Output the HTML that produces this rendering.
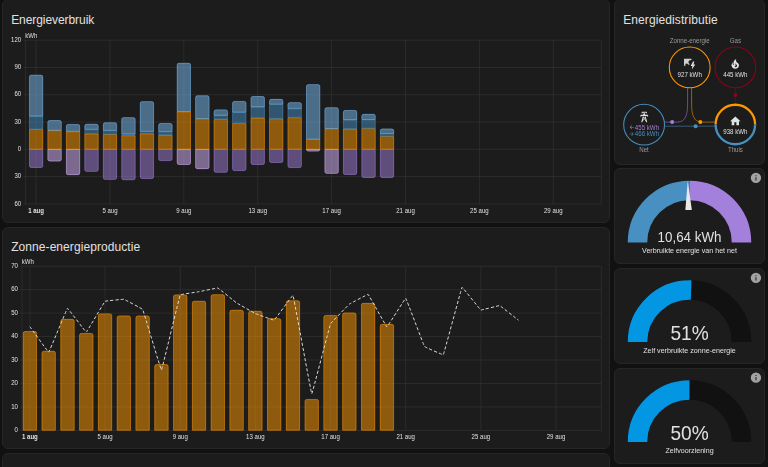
<!DOCTYPE html>
<html lang="nl">
<head>
<meta charset="utf-8">
<title>Energie</title>
<style>
html,body{margin:0;padding:0;background:#111111;}
body{width:768px;height:467px;overflow:hidden;position:relative;font-family:"Liberation Sans", Arial, sans-serif;color:#e1e1e1;}
.card{position:absolute;box-sizing:border-box;background:#1c1c1c;border:1px solid #262626;border-radius:6px;}
.title{position:absolute;font-size:12px;line-height:14px;white-space:nowrap;color:#e1e1e1;}
svg{position:absolute;left:0;top:0;font-family:"Liberation Sans", Arial, sans-serif;will-change:transform;}
</style>
</head>
<body>
<div class="card" style="left:1.5px;top:-1px;width:608.8px;height:223.8px"></div>
<div class="card" style="left:1.5px;top:226.6px;width:608.8px;height:222.8px"></div>
<div class="card" style="left:1.5px;top:452.7px;width:608.8px;height:40px"></div>
<div class="card" style="left:613.7px;top:-1px;width:151.3px;height:165.8px"></div>
<div class="card" style="left:613.7px;top:168.4px;width:151.3px;height:95.8px"></div>
<div class="card" style="left:613.7px;top:268.4px;width:151.3px;height:95.8px"></div>
<div class="card" style="left:613.7px;top:368.4px;width:151.3px;height:95.6px"></div>
<div class="title" style="left:11.2px;top:13.3px;letter-spacing:-0.07px">Energieverbruik</div>
<div class="title" style="left:11.2px;top:240.2px;letter-spacing:0.07px">Zonne-energieproductie</div>
<div class="title" style="left:623.2px;top:13.1px;letter-spacing:0.1px">Energiedistributie</div>
<svg width="768" height="467" viewBox="0 0 768 467">
<g id="usage">
<path d="M23.6,40.2 H601.3 M23.6,67.48 H601.3 M23.6,94.77 H601.3 M23.6,122.05 H601.3 M23.6,149.33 H601.3 M23.6,176.62 H601.3 M23.6,203.9 H601.3 M36.1,40.2 V203.9 M109.98,40.2 V203.9 M183.86,40.2 V203.9 M257.74,40.2 V203.9 M331.62,40.2 V203.9 M405.5,40.2 V203.9 M479.38,40.2 V203.9 M553.26,40.2 V203.9 M25.6,40.2 V203.9 M601.3,40.2 V203.9" stroke="#353535" stroke-width="0.6" fill="none"/>
<text transform="translate(21.2,41.9) scale(0.88,1)" font-size="6.9" text-anchor="end" fill="#e1e1e1" font-weight="normal" >120</text>
<text transform="translate(21.2,69.18) scale(0.88,1)" font-size="6.9" text-anchor="end" fill="#e1e1e1" font-weight="normal" >90</text>
<text transform="translate(21.2,96.47) scale(0.88,1)" font-size="6.9" text-anchor="end" fill="#e1e1e1" font-weight="normal" >60</text>
<text transform="translate(21.2,123.75) scale(0.88,1)" font-size="6.9" text-anchor="end" fill="#e1e1e1" font-weight="normal" >30</text>
<text transform="translate(21.2,151.03) scale(0.88,1)" font-size="6.9" text-anchor="end" fill="#e1e1e1" font-weight="normal" >0</text>
<text transform="translate(21.2,178.32) scale(0.88,1)" font-size="6.9" text-anchor="end" fill="#e1e1e1" font-weight="normal" >30</text>
<text transform="translate(21.2,205.6) scale(0.88,1)" font-size="6.9" text-anchor="end" fill="#e1e1e1" font-weight="normal" >60</text>
<text transform="translate(25.2,38) scale(0.88,1)" font-size="6.9" text-anchor="start" fill="#e1e1e1" font-weight="normal" >kWh</text>
<text transform="translate(36.1,212.5) scale(0.88,1)" font-size="6.9" text-anchor="middle" fill="#e1e1e1" font-weight="bold" >1 aug</text>
<text transform="translate(109.98,212.5) scale(0.88,1)" font-size="6.9" text-anchor="middle" fill="#e1e1e1" font-weight="normal" >5 aug</text>
<text transform="translate(183.86,212.5) scale(0.88,1)" font-size="6.9" text-anchor="middle" fill="#e1e1e1" font-weight="normal" >9 aug</text>
<text transform="translate(257.74,212.5) scale(0.88,1)" font-size="6.9" text-anchor="middle" fill="#e1e1e1" font-weight="normal" >13 aug</text>
<text transform="translate(331.62,212.5) scale(0.88,1)" font-size="6.9" text-anchor="middle" fill="#e1e1e1" font-weight="normal" >17 aug</text>
<text transform="translate(405.5,212.5) scale(0.88,1)" font-size="6.9" text-anchor="middle" fill="#e1e1e1" font-weight="normal" >21 aug</text>
<text transform="translate(479.38,212.5) scale(0.88,1)" font-size="6.9" text-anchor="middle" fill="#e1e1e1" font-weight="normal" >25 aug</text>
<text transform="translate(553.26,212.5) scale(0.88,1)" font-size="6.9" text-anchor="middle" fill="#e1e1e1" font-weight="normal" >29 aug</text>
<path d="M29.2,149.33 L29.2,129.3 L43,129.3 L43,149.33 Z" fill="#ff9800" fill-opacity="0.5"/>
<path d="M29.43,149.11 L29.43,129.53 L42.77,129.53 L42.77,149.11 Z" fill="none" stroke="#ff9800" stroke-width="0.45"/>
<path d="M29.2,129.3 L29.2,116.2 L43,116.2 L43,129.3 Z" fill="#488fc2" fill-opacity="0.5"/>
<path d="M29.43,129.08 L29.43,116.42 L42.77,116.42 L42.77,129.08 Z" fill="none" stroke="#488fc2" stroke-width="0.45"/>
<path d="M29.2,116.2 L29.2,76.95 Q29.2,74.95 31.2,74.95 L41,74.95 Q43,74.95 43,76.95 L43,116.2 Z" fill="#7bbdf3" fill-opacity="0.5"/>
<path d="M29.43,115.98 L29.43,76.95 Q29.43,75.17 31.2,75.17 L41,75.17 Q42.77,75.17 42.77,76.95 L42.77,115.98 Z" fill="none" stroke="#7bbdf3" stroke-width="0.45"/>
<path d="M29.2,149.33 L29.2,165.7 Q29.2,167.7 31.2,167.7 L41,167.7 Q43,167.7 43,165.7 L43,149.33 Z" fill="#a280db" fill-opacity="0.5"/>
<path d="M29.43,149.56 L29.43,165.7 Q29.43,167.47 31.2,167.47 L41,167.47 Q42.77,167.47 42.77,165.7 L42.77,149.56 Z" fill="none" stroke="#a280db" stroke-width="0.45"/>
<path d="M47.67,149.33 L47.67,130.4 L61.47,130.4 L61.47,149.33 Z" fill="#ff9800" fill-opacity="0.5"/>
<path d="M47.9,149.11 L47.9,130.62 L61.24,130.62 L61.24,149.11 Z" fill="none" stroke="#ff9800" stroke-width="0.45"/>
<path d="M47.67,130.4 L47.67,122.3 Q47.67,120.3 49.67,120.3 L59.47,120.3 Q61.47,120.3 61.47,122.3 L61.47,130.4 Z" fill="#7bbdf3" fill-opacity="0.5"/>
<path d="M47.9,130.18 L47.9,122.3 Q47.9,120.52 49.67,120.52 L59.47,120.52 Q61.24,120.52 61.24,122.3 L61.24,130.18 Z" fill="none" stroke="#7bbdf3" stroke-width="0.45"/>
<path d="M47.67,149.33 L47.67,159.2 Q47.67,161.2 49.67,161.2 L59.47,161.2 Q61.47,161.2 61.47,159.2 L61.47,149.33 Z" fill="#dcb6ff" fill-opacity="0.5"/>
<path d="M47.9,149.56 L47.9,159.2 Q47.9,160.97 49.67,160.97 L59.47,160.97 Q61.24,160.97 61.24,159.2 L61.24,149.56 Z" fill="none" stroke="#dcb6ff" stroke-width="0.45"/>
<path d="M66.14,149.33 L66.14,131.5 L79.94,131.5 L79.94,149.33 Z" fill="#ff9800" fill-opacity="0.5"/>
<path d="M66.36,149.11 L66.36,131.72 L79.72,131.72 L79.72,149.11 Z" fill="none" stroke="#ff9800" stroke-width="0.45"/>
<path d="M66.14,131.5 L66.14,126.2 Q66.14,124.2 68.14,124.2 L77.94,124.2 Q79.94,124.2 79.94,126.2 L79.94,131.5 Z" fill="#7bbdf3" fill-opacity="0.5"/>
<path d="M66.36,131.28 L66.36,126.2 Q66.36,124.42 68.14,124.42 L77.94,124.42 Q79.72,124.42 79.72,126.2 L79.72,131.28 Z" fill="none" stroke="#7bbdf3" stroke-width="0.45"/>
<path d="M66.14,149.33 L66.14,172.9 Q66.14,174.9 68.14,174.9 L77.94,174.9 Q79.94,174.9 79.94,172.9 L79.94,149.33 Z" fill="#dcb6ff" fill-opacity="0.5"/>
<path d="M66.36,149.56 L66.36,172.9 Q66.36,174.68 68.14,174.68 L77.94,174.68 Q79.72,174.68 79.72,172.9 L79.72,149.56 Z" fill="none" stroke="#dcb6ff" stroke-width="0.45"/>
<path d="M84.61,149.33 L84.61,133.8 L98.41,133.8 L98.41,149.33 Z" fill="#ff9800" fill-opacity="0.5"/>
<path d="M84.83,149.11 L84.83,134.03 L98.19,134.03 L98.19,149.11 Z" fill="none" stroke="#ff9800" stroke-width="0.45"/>
<path d="M84.61,133.8 L84.61,129.5 L98.41,129.5 L98.41,133.8 Z" fill="#488fc2" fill-opacity="0.5"/>
<path d="M84.83,133.58 L84.83,129.72 L98.19,129.72 L98.19,133.58 Z" fill="none" stroke="#488fc2" stroke-width="0.45"/>
<path d="M84.61,129.5 L84.61,126 Q84.61,124 86.61,124 L96.41,124 Q98.41,124 98.41,126 L98.41,129.5 Z" fill="#7bbdf3" fill-opacity="0.5"/>
<path d="M84.83,129.28 L84.83,126 Q84.83,124.22 86.61,124.22 L96.41,124.22 Q98.19,124.22 98.19,126 L98.19,129.28 Z" fill="none" stroke="#7bbdf3" stroke-width="0.45"/>
<path d="M84.61,149.33 L84.61,169.6 Q84.61,171.6 86.61,171.6 L96.41,171.6 Q98.41,171.6 98.41,169.6 L98.41,149.33 Z" fill="#a280db" fill-opacity="0.5"/>
<path d="M84.83,149.56 L84.83,169.6 Q84.83,171.38 86.61,171.38 L96.41,171.38 Q98.19,171.38 98.19,169.6 L98.19,149.56 Z" fill="none" stroke="#a280db" stroke-width="0.45"/>
<path d="M103.08,149.33 L103.08,134.3 L116.88,134.3 L116.88,149.33 Z" fill="#ff9800" fill-opacity="0.5"/>
<path d="M103.3,149.11 L103.3,134.53 L116.66,134.53 L116.66,149.11 Z" fill="none" stroke="#ff9800" stroke-width="0.45"/>
<path d="M103.08,134.3 L103.08,130.6 L116.88,130.6 L116.88,134.3 Z" fill="#488fc2" fill-opacity="0.5"/>
<path d="M103.3,134.08 L103.3,130.82 L116.66,130.82 L116.66,134.08 Z" fill="none" stroke="#488fc2" stroke-width="0.45"/>
<path d="M103.08,130.6 L103.08,124.6 Q103.08,122.6 105.08,122.6 L114.88,122.6 Q116.88,122.6 116.88,124.6 L116.88,130.6 Z" fill="#7bbdf3" fill-opacity="0.5"/>
<path d="M103.3,130.38 L103.3,124.6 Q103.3,122.82 105.08,122.82 L114.88,122.82 Q116.66,122.82 116.66,124.6 L116.66,130.38 Z" fill="none" stroke="#7bbdf3" stroke-width="0.45"/>
<path d="M103.08,149.33 L103.08,177.6 Q103.08,179.6 105.08,179.6 L114.88,179.6 Q116.88,179.6 116.88,177.6 L116.88,149.33 Z" fill="#a280db" fill-opacity="0.5"/>
<path d="M103.3,149.56 L103.3,177.6 Q103.3,179.38 105.08,179.38 L114.88,179.38 Q116.66,179.38 116.66,177.6 L116.66,149.56 Z" fill="none" stroke="#a280db" stroke-width="0.45"/>
<path d="M121.55,149.33 L121.55,135.6 L135.35,135.6 L135.35,149.33 Z" fill="#ff9800" fill-opacity="0.5"/>
<path d="M121.77,149.11 L121.77,135.82 L135.12,135.82 L135.12,149.11 Z" fill="none" stroke="#ff9800" stroke-width="0.45"/>
<path d="M121.55,135.6 L121.55,134.1 L135.35,134.1 L135.35,135.6 Z" fill="#488fc2" fill-opacity="0.5"/>
<path d="M121.77,135.38 L121.77,134.32 L135.12,134.32 L135.12,135.38 Z" fill="none" stroke="#488fc2" stroke-width="0.45"/>
<path d="M121.55,134.1 L121.55,119.4 Q121.55,117.4 123.55,117.4 L133.35,117.4 Q135.35,117.4 135.35,119.4 L135.35,134.1 Z" fill="#7bbdf3" fill-opacity="0.5"/>
<path d="M121.77,133.88 L121.77,119.4 Q121.77,117.62 123.55,117.62 L133.35,117.62 Q135.12,117.62 135.12,119.4 L135.12,133.88 Z" fill="none" stroke="#7bbdf3" stroke-width="0.45"/>
<path d="M121.55,149.33 L121.55,178 Q121.55,180 123.55,180 L133.35,180 Q135.35,180 135.35,178 L135.35,149.33 Z" fill="#a280db" fill-opacity="0.5"/>
<path d="M121.77,149.56 L121.77,178 Q121.77,179.78 123.55,179.78 L133.35,179.78 Q135.12,179.78 135.12,178 L135.12,149.56 Z" fill="none" stroke="#a280db" stroke-width="0.45"/>
<path d="M140.02,149.33 L140.02,133.8 L153.82,133.8 L153.82,149.33 Z" fill="#ff9800" fill-opacity="0.5"/>
<path d="M140.24,149.11 L140.24,134.03 L153.59,134.03 L153.59,149.11 Z" fill="none" stroke="#ff9800" stroke-width="0.45"/>
<path d="M140.02,133.8 L140.02,131.5 L153.82,131.5 L153.82,133.8 Z" fill="#488fc2" fill-opacity="0.5"/>
<path d="M140.24,133.58 L140.24,131.72 L153.59,131.72 L153.59,133.58 Z" fill="none" stroke="#488fc2" stroke-width="0.45"/>
<path d="M140.02,131.5 L140.02,103.45 Q140.02,101.45 142.02,101.45 L151.82,101.45 Q153.82,101.45 153.82,103.45 L153.82,131.5 Z" fill="#7bbdf3" fill-opacity="0.5"/>
<path d="M140.24,131.28 L140.24,103.45 Q140.24,101.67 142.02,101.67 L151.82,101.67 Q153.59,101.67 153.59,103.45 L153.59,131.28 Z" fill="none" stroke="#7bbdf3" stroke-width="0.45"/>
<path d="M140.02,149.33 L140.02,176.8 Q140.02,178.8 142.02,178.8 L151.82,178.8 Q153.82,178.8 153.82,176.8 L153.82,149.33 Z" fill="#a280db" fill-opacity="0.5"/>
<path d="M140.24,149.56 L140.24,176.8 Q140.24,178.58 142.02,178.58 L151.82,178.58 Q153.59,178.58 153.59,176.8 L153.59,149.56 Z" fill="none" stroke="#a280db" stroke-width="0.45"/>
<path d="M158.49,149.33 L158.49,135 L172.29,135 L172.29,149.33 Z" fill="#ff9800" fill-opacity="0.5"/>
<path d="M158.71,149.11 L158.71,135.22 L172.06,135.22 L172.06,149.11 Z" fill="none" stroke="#ff9800" stroke-width="0.45"/>
<path d="M158.49,135 L158.49,131.8 L172.29,131.8 L172.29,135 Z" fill="#488fc2" fill-opacity="0.5"/>
<path d="M158.71,134.78 L158.71,132.03 L172.06,132.03 L172.06,134.78 Z" fill="none" stroke="#488fc2" stroke-width="0.45"/>
<path d="M158.49,131.8 L158.49,125.3 Q158.49,123.3 160.49,123.3 L170.29,123.3 Q172.29,123.3 172.29,125.3 L172.29,131.8 Z" fill="#7bbdf3" fill-opacity="0.5"/>
<path d="M158.71,131.58 L158.71,125.3 Q158.71,123.52 160.49,123.52 L170.29,123.52 Q172.06,123.52 172.06,125.3 L172.06,131.58 Z" fill="none" stroke="#7bbdf3" stroke-width="0.45"/>
<path d="M158.49,149.33 L158.49,158.8 Q158.49,160.8 160.49,160.8 L170.29,160.8 Q172.29,160.8 172.29,158.8 L172.29,149.33 Z" fill="#a280db" fill-opacity="0.5"/>
<path d="M158.71,149.56 L158.71,158.8 Q158.71,160.58 160.49,160.58 L170.29,160.58 Q172.06,160.58 172.06,158.8 L172.06,149.56 Z" fill="none" stroke="#a280db" stroke-width="0.45"/>
<path d="M176.96,149.33 L176.96,111.7 L190.76,111.7 L190.76,149.33 Z" fill="#ff9800" fill-opacity="0.5"/>
<path d="M177.18,149.11 L177.18,111.92 L190.53,111.92 L190.53,149.11 Z" fill="none" stroke="#ff9800" stroke-width="0.45"/>
<path d="M176.96,111.7 L176.96,65 Q176.96,63 178.96,63 L188.76,63 Q190.76,63 190.76,65 L190.76,111.7 Z" fill="#7bbdf3" fill-opacity="0.5"/>
<path d="M177.18,111.48 L177.18,65 Q177.18,63.23 178.96,63.23 L188.76,63.23 Q190.53,63.23 190.53,65 L190.53,111.48 Z" fill="none" stroke="#7bbdf3" stroke-width="0.45"/>
<path d="M176.96,149.33 L176.96,162.7 Q176.96,164.7 178.96,164.7 L188.76,164.7 Q190.76,164.7 190.76,162.7 L190.76,149.33 Z" fill="#dcb6ff" fill-opacity="0.5"/>
<path d="M177.18,149.56 L177.18,162.7 Q177.18,164.47 178.96,164.47 L188.76,164.47 Q190.53,164.47 190.53,162.7 L190.53,149.56 Z" fill="none" stroke="#dcb6ff" stroke-width="0.45"/>
<path d="M195.43,149.33 L195.43,118.7 L209.23,118.7 L209.23,149.33 Z" fill="#ff9800" fill-opacity="0.5"/>
<path d="M195.65,149.11 L195.65,118.92 L209,118.92 L209,149.11 Z" fill="none" stroke="#ff9800" stroke-width="0.45"/>
<path d="M195.43,118.7 L195.43,97.6 Q195.43,95.6 197.43,95.6 L207.23,95.6 Q209.23,95.6 209.23,97.6 L209.23,118.7 Z" fill="#7bbdf3" fill-opacity="0.5"/>
<path d="M195.65,118.48 L195.65,97.6 Q195.65,95.82 197.43,95.82 L207.23,95.82 Q209,95.82 209,97.6 L209,118.48 Z" fill="none" stroke="#7bbdf3" stroke-width="0.45"/>
<path d="M195.43,149.33 L195.43,166.9 Q195.43,168.9 197.43,168.9 L207.23,168.9 Q209.23,168.9 209.23,166.9 L209.23,149.33 Z" fill="#dcb6ff" fill-opacity="0.5"/>
<path d="M195.65,149.56 L195.65,166.9 Q195.65,168.68 197.43,168.68 L207.23,168.68 Q209,168.68 209,166.9 L209,149.56 Z" fill="none" stroke="#dcb6ff" stroke-width="0.45"/>
<path d="M213.9,149.33 L213.9,119.3 L227.7,119.3 L227.7,149.33 Z" fill="#ff9800" fill-opacity="0.5"/>
<path d="M214.12,149.11 L214.12,119.52 L227.47,119.52 L227.47,149.11 Z" fill="none" stroke="#ff9800" stroke-width="0.45"/>
<path d="M213.9,119.3 L213.9,115.4 L227.7,115.4 L227.7,119.3 Z" fill="#488fc2" fill-opacity="0.5"/>
<path d="M214.12,119.08 L214.12,115.62 L227.47,115.62 L227.47,119.08 Z" fill="none" stroke="#488fc2" stroke-width="0.45"/>
<path d="M213.9,115.4 L213.9,111.7 Q213.9,109.7 215.9,109.7 L225.7,109.7 Q227.7,109.7 227.7,111.7 L227.7,115.4 Z" fill="#7bbdf3" fill-opacity="0.5"/>
<path d="M214.12,115.18 L214.12,111.7 Q214.12,109.92 215.9,109.92 L225.7,109.92 Q227.47,109.92 227.47,111.7 L227.47,115.18 Z" fill="none" stroke="#7bbdf3" stroke-width="0.45"/>
<path d="M213.9,149.33 L213.9,170.5 Q213.9,172.5 215.9,172.5 L225.7,172.5 Q227.7,172.5 227.7,170.5 L227.7,149.33 Z" fill="#a280db" fill-opacity="0.5"/>
<path d="M214.12,149.56 L214.12,170.5 Q214.12,172.28 215.9,172.28 L225.7,172.28 Q227.47,172.28 227.47,170.5 L227.47,149.56 Z" fill="none" stroke="#a280db" stroke-width="0.45"/>
<path d="M232.37,149.33 L232.37,123.4 L246.17,123.4 L246.17,149.33 Z" fill="#ff9800" fill-opacity="0.5"/>
<path d="M232.59,149.11 L232.59,123.62 L245.94,123.62 L245.94,149.11 Z" fill="none" stroke="#ff9800" stroke-width="0.45"/>
<path d="M232.37,123.4 L232.37,112.3 L246.17,112.3 L246.17,123.4 Z" fill="#488fc2" fill-opacity="0.5"/>
<path d="M232.59,123.18 L232.59,112.52 L245.94,112.52 L245.94,123.18 Z" fill="none" stroke="#488fc2" stroke-width="0.45"/>
<path d="M232.37,112.3 L232.37,103.2 Q232.37,101.2 234.37,101.2 L244.17,101.2 Q246.17,101.2 246.17,103.2 L246.17,112.3 Z" fill="#7bbdf3" fill-opacity="0.5"/>
<path d="M232.59,112.08 L232.59,103.2 Q232.59,101.42 234.37,101.42 L244.17,101.42 Q245.94,101.42 245.94,103.2 L245.94,112.08 Z" fill="none" stroke="#7bbdf3" stroke-width="0.45"/>
<path d="M232.37,149.33 L232.37,168.8 Q232.37,170.8 234.37,170.8 L244.17,170.8 Q246.17,170.8 246.17,168.8 L246.17,149.33 Z" fill="#a280db" fill-opacity="0.5"/>
<path d="M232.59,149.56 L232.59,168.8 Q232.59,170.58 234.37,170.58 L244.17,170.58 Q245.94,170.58 245.94,168.8 L245.94,149.56 Z" fill="none" stroke="#a280db" stroke-width="0.45"/>
<path d="M250.84,149.33 L250.84,118 L264.64,118 L264.64,149.33 Z" fill="#ff9800" fill-opacity="0.5"/>
<path d="M251.06,149.11 L251.06,118.22 L264.41,118.22 L264.41,149.11 Z" fill="none" stroke="#ff9800" stroke-width="0.45"/>
<path d="M250.84,118 L250.84,107 L264.64,107 L264.64,118 Z" fill="#488fc2" fill-opacity="0.5"/>
<path d="M251.06,117.78 L251.06,107.22 L264.41,107.22 L264.41,117.78 Z" fill="none" stroke="#488fc2" stroke-width="0.45"/>
<path d="M250.84,107 L250.84,98.3 Q250.84,96.3 252.84,96.3 L262.64,96.3 Q264.64,96.3 264.64,98.3 L264.64,107 Z" fill="#7bbdf3" fill-opacity="0.5"/>
<path d="M251.06,106.78 L251.06,98.3 Q251.06,96.52 252.84,96.52 L262.64,96.52 Q264.41,96.52 264.41,98.3 L264.41,106.78 Z" fill="none" stroke="#7bbdf3" stroke-width="0.45"/>
<path d="M250.84,149.33 L250.84,162.7 Q250.84,164.7 252.84,164.7 L262.64,164.7 Q264.64,164.7 264.64,162.7 L264.64,149.33 Z" fill="#a280db" fill-opacity="0.5"/>
<path d="M251.06,149.56 L251.06,162.7 Q251.06,164.47 252.84,164.47 L262.64,164.47 Q264.41,164.47 264.41,162.7 L264.41,149.56 Z" fill="none" stroke="#a280db" stroke-width="0.45"/>
<path d="M269.31,149.33 L269.31,118.7 L283.11,118.7 L283.11,149.33 Z" fill="#ff9800" fill-opacity="0.5"/>
<path d="M269.54,149.11 L269.54,118.92 L282.88,118.92 L282.88,149.11 Z" fill="none" stroke="#ff9800" stroke-width="0.45"/>
<path d="M269.31,118.7 L269.31,104.3 L283.11,104.3 L283.11,118.7 Z" fill="#488fc2" fill-opacity="0.5"/>
<path d="M269.54,118.48 L269.54,104.52 L282.88,104.52 L282.88,118.48 Z" fill="none" stroke="#488fc2" stroke-width="0.45"/>
<path d="M269.31,104.3 L269.31,101.1 Q269.31,99.1 271.31,99.1 L281.11,99.1 Q283.11,99.1 283.11,101.1 L283.11,104.3 Z" fill="#7bbdf3" fill-opacity="0.5"/>
<path d="M269.54,104.08 L269.54,101.1 Q269.54,99.32 271.31,99.32 L281.11,99.32 Q282.88,99.32 282.88,101.1 L282.88,104.08 Z" fill="none" stroke="#7bbdf3" stroke-width="0.45"/>
<path d="M269.31,149.33 L269.31,160.7 Q269.31,162.7 271.31,162.7 L281.11,162.7 Q283.11,162.7 283.11,160.7 L283.11,149.33 Z" fill="#a280db" fill-opacity="0.5"/>
<path d="M269.54,149.56 L269.54,160.7 Q269.54,162.47 271.31,162.47 L281.11,162.47 Q282.88,162.47 282.88,160.7 L282.88,149.56 Z" fill="none" stroke="#a280db" stroke-width="0.45"/>
<path d="M287.78,149.33 L287.78,117.5 L301.58,117.5 L301.58,149.33 Z" fill="#ff9800" fill-opacity="0.5"/>
<path d="M288.01,149.11 L288.01,117.72 L301.35,117.72 L301.35,149.11 Z" fill="none" stroke="#ff9800" stroke-width="0.45"/>
<path d="M287.78,117.5 L287.78,108.6 L301.58,108.6 L301.58,117.5 Z" fill="#488fc2" fill-opacity="0.5"/>
<path d="M288.01,117.28 L288.01,108.82 L301.35,108.82 L301.35,117.28 Z" fill="none" stroke="#488fc2" stroke-width="0.45"/>
<path d="M287.78,108.6 L287.78,104.4 Q287.78,102.4 289.78,102.4 L299.58,102.4 Q301.58,102.4 301.58,104.4 L301.58,108.6 Z" fill="#7bbdf3" fill-opacity="0.5"/>
<path d="M288.01,108.38 L288.01,104.4 Q288.01,102.62 289.78,102.62 L299.58,102.62 Q301.35,102.62 301.35,104.4 L301.35,108.38 Z" fill="none" stroke="#7bbdf3" stroke-width="0.45"/>
<path d="M287.78,149.33 L287.78,165.8 Q287.78,167.8 289.78,167.8 L299.58,167.8 Q301.58,167.8 301.58,165.8 L301.58,149.33 Z" fill="#a280db" fill-opacity="0.5"/>
<path d="M288.01,149.56 L288.01,165.8 Q288.01,167.58 289.78,167.58 L299.58,167.58 Q301.35,167.58 301.35,165.8 L301.35,149.56 Z" fill="none" stroke="#a280db" stroke-width="0.45"/>
<path d="M306.25,149.33 L306.25,139.3 L320.05,139.3 L320.05,149.33 Z" fill="#ff9800" fill-opacity="0.5"/>
<path d="M306.48,149.11 L306.48,139.53 L319.82,139.53 L319.82,149.11 Z" fill="none" stroke="#ff9800" stroke-width="0.45"/>
<path d="M306.25,139.3 L306.25,86.4 Q306.25,84.4 308.25,84.4 L318.05,84.4 Q320.05,84.4 320.05,86.4 L320.05,139.3 Z" fill="#7bbdf3" fill-opacity="0.5"/>
<path d="M306.48,139.08 L306.48,86.4 Q306.48,84.62 308.25,84.62 L318.05,84.62 Q319.82,84.62 319.82,86.4 L319.82,139.08 Z" fill="none" stroke="#7bbdf3" stroke-width="0.45"/>
<path d="M306.25,149.33 L306.25,149.33 Q306.25,151.25 308.17,151.25 L318.13,151.25 Q320.05,151.25 320.05,149.33 L320.05,149.33 Z" fill="#dcb6ff" fill-opacity="0.5"/>
<path d="M306.48,149.56 L306.48,149.33 Q306.48,151.03 308.17,151.03 L318.13,151.03 Q319.82,151.03 319.82,149.33 L319.82,149.56 Z" fill="none" stroke="#dcb6ff" stroke-width="0.45"/>
<path d="M324.72,149.33 L324.72,128.65 L338.52,128.65 L338.52,149.33 Z" fill="#ff9800" fill-opacity="0.5"/>
<path d="M324.95,149.11 L324.95,128.88 L338.29,128.88 L338.29,149.11 Z" fill="none" stroke="#ff9800" stroke-width="0.45"/>
<path d="M324.72,128.65 L324.72,109.55 Q324.72,107.55 326.72,107.55 L336.52,107.55 Q338.52,107.55 338.52,109.55 L338.52,128.65 Z" fill="#7bbdf3" fill-opacity="0.5"/>
<path d="M324.95,128.43 L324.95,109.55 Q324.95,107.77 326.72,107.77 L336.52,107.77 Q338.29,107.77 338.29,109.55 L338.29,128.43 Z" fill="none" stroke="#7bbdf3" stroke-width="0.45"/>
<path d="M324.72,149.33 L324.72,171.6 Q324.72,173.6 326.72,173.6 L336.52,173.6 Q338.52,173.6 338.52,171.6 L338.52,149.33 Z" fill="#dcb6ff" fill-opacity="0.5"/>
<path d="M324.95,149.56 L324.95,171.6 Q324.95,173.38 326.72,173.38 L336.52,173.38 Q338.29,173.38 338.29,171.6 L338.29,149.56 Z" fill="none" stroke="#dcb6ff" stroke-width="0.45"/>
<path d="M343.19,149.33 L343.19,128.9 L356.99,128.9 L356.99,149.33 Z" fill="#ff9800" fill-opacity="0.5"/>
<path d="M343.42,149.11 L343.42,129.12 L356.76,129.12 L356.76,149.11 Z" fill="none" stroke="#ff9800" stroke-width="0.45"/>
<path d="M343.19,128.9 L343.19,119.9 L356.99,119.9 L356.99,128.9 Z" fill="#488fc2" fill-opacity="0.5"/>
<path d="M343.42,128.68 L343.42,120.12 L356.76,120.12 L356.76,128.68 Z" fill="none" stroke="#488fc2" stroke-width="0.45"/>
<path d="M343.19,119.9 L343.19,112.2 Q343.19,110.2 345.19,110.2 L354.99,110.2 Q356.99,110.2 356.99,112.2 L356.99,119.9 Z" fill="#7bbdf3" fill-opacity="0.5"/>
<path d="M343.42,119.68 L343.42,112.2 Q343.42,110.42 345.19,110.42 L354.99,110.42 Q356.76,110.42 356.76,112.2 L356.76,119.68 Z" fill="none" stroke="#7bbdf3" stroke-width="0.45"/>
<path d="M343.19,149.33 L343.19,172.7 Q343.19,174.7 345.19,174.7 L354.99,174.7 Q356.99,174.7 356.99,172.7 L356.99,149.33 Z" fill="#a280db" fill-opacity="0.5"/>
<path d="M343.42,149.56 L343.42,172.7 Q343.42,174.47 345.19,174.47 L354.99,174.47 Q356.76,174.47 356.76,172.7 L356.76,149.56 Z" fill="none" stroke="#a280db" stroke-width="0.45"/>
<path d="M361.66,149.33 L361.66,128.4 L375.46,128.4 L375.46,149.33 Z" fill="#ff9800" fill-opacity="0.5"/>
<path d="M361.89,149.11 L361.89,128.62 L375.23,128.62 L375.23,149.11 Z" fill="none" stroke="#ff9800" stroke-width="0.45"/>
<path d="M361.66,128.4 L361.66,119.7 L375.46,119.7 L375.46,128.4 Z" fill="#488fc2" fill-opacity="0.5"/>
<path d="M361.89,128.18 L361.89,119.92 L375.23,119.92 L375.23,128.18 Z" fill="none" stroke="#488fc2" stroke-width="0.45"/>
<path d="M361.66,119.7 L361.66,116.1 Q361.66,114.1 363.66,114.1 L373.46,114.1 Q375.46,114.1 375.46,116.1 L375.46,119.7 Z" fill="#7bbdf3" fill-opacity="0.5"/>
<path d="M361.89,119.48 L361.89,116.1 Q361.89,114.32 363.66,114.32 L373.46,114.32 Q375.23,114.32 375.23,116.1 L375.23,119.48 Z" fill="none" stroke="#7bbdf3" stroke-width="0.45"/>
<path d="M361.66,149.33 L361.66,175.7 Q361.66,177.7 363.66,177.7 L373.46,177.7 Q375.46,177.7 375.46,175.7 L375.46,149.33 Z" fill="#a280db" fill-opacity="0.5"/>
<path d="M361.89,149.56 L361.89,175.7 Q361.89,177.47 363.66,177.47 L373.46,177.47 Q375.23,177.47 375.23,175.7 L375.23,149.56 Z" fill="none" stroke="#a280db" stroke-width="0.45"/>
<path d="M380.13,149.33 L380.13,136.3 L393.93,136.3 L393.93,149.33 Z" fill="#ff9800" fill-opacity="0.5"/>
<path d="M380.36,149.11 L380.36,136.53 L393.7,136.53 L393.7,149.11 Z" fill="none" stroke="#ff9800" stroke-width="0.45"/>
<path d="M380.13,136.3 L380.13,133.7 L393.93,133.7 L393.93,136.3 Z" fill="#488fc2" fill-opacity="0.5"/>
<path d="M380.36,136.08 L380.36,133.92 L393.7,133.92 L393.7,136.08 Z" fill="none" stroke="#488fc2" stroke-width="0.45"/>
<path d="M380.13,133.7 L380.13,130.85 Q380.13,128.85 382.13,128.85 L391.93,128.85 Q393.93,128.85 393.93,130.85 L393.93,133.7 Z" fill="#7bbdf3" fill-opacity="0.5"/>
<path d="M380.36,133.47 L380.36,130.85 Q380.36,129.07 382.13,129.07 L391.93,129.07 Q393.7,129.07 393.7,130.85 L393.7,133.47 Z" fill="none" stroke="#7bbdf3" stroke-width="0.45"/>
<path d="M380.13,149.33 L380.13,175.7 Q380.13,177.7 382.13,177.7 L391.93,177.7 Q393.93,177.7 393.93,175.7 L393.93,149.33 Z" fill="#a280db" fill-opacity="0.5"/>
<path d="M380.36,149.56 L380.36,175.7 Q380.36,177.47 382.13,177.47 L391.93,177.47 Q393.7,177.47 393.7,175.7 L393.7,149.56 Z" fill="none" stroke="#a280db" stroke-width="0.45"/>
</g>
<g id="solar">
<path d="M20,266.2 H601.3 M20,289.66 H601.3 M20,313.11 H601.3 M20,336.57 H601.3 M20,360.03 H601.3 M20,383.49 H601.3 M20,406.94 H601.3 M20,430.4 H601.3 M29.9,266.2 V430.4 M105.06,266.2 V430.4 M180.22,266.2 V430.4 M255.38,266.2 V430.4 M330.54,266.2 V430.4 M405.7,266.2 V430.4 M480.86,266.2 V430.4 M556.02,266.2 V430.4 M22,266.2 V430.4 M601.3,266.2 V430.4" stroke="#353535" stroke-width="0.6" fill="none"/>
<text transform="translate(17.9,267.9) scale(0.88,1)" font-size="6.9" text-anchor="end" fill="#e1e1e1" font-weight="normal" >70</text>
<text transform="translate(17.9,291.36) scale(0.88,1)" font-size="6.9" text-anchor="end" fill="#e1e1e1" font-weight="normal" >60</text>
<text transform="translate(17.9,314.81) scale(0.88,1)" font-size="6.9" text-anchor="end" fill="#e1e1e1" font-weight="normal" >50</text>
<text transform="translate(17.9,338.27) scale(0.88,1)" font-size="6.9" text-anchor="end" fill="#e1e1e1" font-weight="normal" >40</text>
<text transform="translate(17.9,361.73) scale(0.88,1)" font-size="6.9" text-anchor="end" fill="#e1e1e1" font-weight="normal" >30</text>
<text transform="translate(17.9,385.19) scale(0.88,1)" font-size="6.9" text-anchor="end" fill="#e1e1e1" font-weight="normal" >20</text>
<text transform="translate(17.9,408.64) scale(0.88,1)" font-size="6.9" text-anchor="end" fill="#e1e1e1" font-weight="normal" >10</text>
<text transform="translate(17.9,432.1) scale(0.88,1)" font-size="6.9" text-anchor="end" fill="#e1e1e1" font-weight="normal" >0</text>
<text transform="translate(21.8,264.2) scale(0.88,1)" font-size="6.9" text-anchor="start" fill="#e1e1e1" font-weight="normal" >kWh</text>
<text transform="translate(29.9,438.8) scale(0.88,1)" font-size="6.9" text-anchor="middle" fill="#e1e1e1" font-weight="bold" >1 aug</text>
<text transform="translate(105.06,438.8) scale(0.88,1)" font-size="6.9" text-anchor="middle" fill="#e1e1e1" font-weight="normal" >5 aug</text>
<text transform="translate(180.22,438.8) scale(0.88,1)" font-size="6.9" text-anchor="middle" fill="#e1e1e1" font-weight="normal" >9 aug</text>
<text transform="translate(255.38,438.8) scale(0.88,1)" font-size="6.9" text-anchor="middle" fill="#e1e1e1" font-weight="normal" >13 aug</text>
<text transform="translate(330.54,438.8) scale(0.88,1)" font-size="6.9" text-anchor="middle" fill="#e1e1e1" font-weight="normal" >17 aug</text>
<text transform="translate(405.7,438.8) scale(0.88,1)" font-size="6.9" text-anchor="middle" fill="#e1e1e1" font-weight="normal" >21 aug</text>
<text transform="translate(480.86,438.8) scale(0.88,1)" font-size="6.9" text-anchor="middle" fill="#e1e1e1" font-weight="normal" >25 aug</text>
<text transform="translate(556.02,438.8) scale(0.88,1)" font-size="6.9" text-anchor="middle" fill="#e1e1e1" font-weight="normal" >29 aug</text>
<path d="M23,430.4 L23,333.2 Q23,331.2 25,331.2 L34.8,331.2 Q36.8,331.2 36.8,333.2 L36.8,430.4 Z" fill="#ff9800" fill-opacity="0.5"/>
<path d="M23.23,430.17 L23.23,333.2 Q23.23,331.43 25,331.43 L34.8,331.43 Q36.57,331.43 36.57,333.2 L36.57,430.17 Z" fill="none" stroke="#ff9800" stroke-width="0.45"/>
<path d="M41.79,430.4 L41.79,353 Q41.79,351 43.79,351 L53.59,351 Q55.59,351 55.59,353 L55.59,430.4 Z" fill="#ff9800" fill-opacity="0.5"/>
<path d="M42.02,430.17 L42.02,353 Q42.02,351.23 43.79,351.23 L53.59,351.23 Q55.36,351.23 55.36,353 L55.36,430.17 Z" fill="none" stroke="#ff9800" stroke-width="0.45"/>
<path d="M60.58,430.4 L60.58,321.1 Q60.58,319.1 62.58,319.1 L72.38,319.1 Q74.38,319.1 74.38,321.1 L74.38,430.4 Z" fill="#ff9800" fill-opacity="0.5"/>
<path d="M60.8,430.17 L60.8,321.1 Q60.8,319.33 62.58,319.33 L72.38,319.33 Q74.16,319.33 74.16,321.1 L74.16,430.17 Z" fill="none" stroke="#ff9800" stroke-width="0.45"/>
<path d="M79.37,430.4 L79.37,335.2 Q79.37,333.2 81.37,333.2 L91.17,333.2 Q93.17,333.2 93.17,335.2 L93.17,430.4 Z" fill="#ff9800" fill-opacity="0.5"/>
<path d="M79.59,430.17 L79.59,335.2 Q79.59,333.43 81.37,333.43 L91.17,333.43 Q92.95,333.43 92.95,335.2 L92.95,430.17 Z" fill="none" stroke="#ff9800" stroke-width="0.45"/>
<path d="M98.16,430.4 L98.16,315.65 Q98.16,313.65 100.16,313.65 L109.96,313.65 Q111.96,313.65 111.96,315.65 L111.96,430.4 Z" fill="#ff9800" fill-opacity="0.5"/>
<path d="M98.38,430.17 L98.38,315.65 Q98.38,313.88 100.16,313.88 L109.96,313.88 Q111.74,313.88 111.74,315.65 L111.74,430.17 Z" fill="none" stroke="#ff9800" stroke-width="0.45"/>
<path d="M116.95,430.4 L116.95,317.8 Q116.95,315.8 118.95,315.8 L128.75,315.8 Q130.75,315.8 130.75,317.8 L130.75,430.4 Z" fill="#ff9800" fill-opacity="0.5"/>
<path d="M117.17,430.17 L117.17,317.8 Q117.17,316.03 118.95,316.03 L128.75,316.03 Q130.53,316.03 130.53,317.8 L130.53,430.17 Z" fill="none" stroke="#ff9800" stroke-width="0.45"/>
<path d="M135.74,430.4 L135.74,317.8 Q135.74,315.8 137.74,315.8 L147.54,315.8 Q149.54,315.8 149.54,317.8 L149.54,430.4 Z" fill="#ff9800" fill-opacity="0.5"/>
<path d="M135.96,430.17 L135.96,317.8 Q135.96,316.03 137.74,316.03 L147.54,316.03 Q149.31,316.03 149.31,317.8 L149.31,430.17 Z" fill="none" stroke="#ff9800" stroke-width="0.45"/>
<path d="M154.53,430.4 L154.53,366.3 Q154.53,364.3 156.53,364.3 L166.33,364.3 Q168.33,364.3 168.33,366.3 L168.33,430.4 Z" fill="#ff9800" fill-opacity="0.5"/>
<path d="M154.75,430.17 L154.75,366.3 Q154.75,364.53 156.53,364.53 L166.33,364.53 Q168.11,364.53 168.11,366.3 L168.11,430.17 Z" fill="none" stroke="#ff9800" stroke-width="0.45"/>
<path d="M173.32,430.4 L173.32,296.7 Q173.32,294.7 175.32,294.7 L185.12,294.7 Q187.12,294.7 187.12,296.7 L187.12,430.4 Z" fill="#ff9800" fill-opacity="0.5"/>
<path d="M173.54,430.17 L173.54,296.7 Q173.54,294.93 175.32,294.93 L185.12,294.93 Q186.9,294.93 186.9,296.7 L186.9,430.17 Z" fill="none" stroke="#ff9800" stroke-width="0.45"/>
<path d="M192.11,430.4 L192.11,303 Q192.11,301 194.11,301 L203.91,301 Q205.91,301 205.91,303 L205.91,430.4 Z" fill="#ff9800" fill-opacity="0.5"/>
<path d="M192.33,430.17 L192.33,303 Q192.33,301.23 194.11,301.23 L203.91,301.23 Q205.69,301.23 205.69,303 L205.69,430.17 Z" fill="none" stroke="#ff9800" stroke-width="0.45"/>
<path d="M210.9,430.4 L210.9,296.5 Q210.9,294.5 212.9,294.5 L222.7,294.5 Q224.7,294.5 224.7,296.5 L224.7,430.4 Z" fill="#ff9800" fill-opacity="0.5"/>
<path d="M211.12,430.17 L211.12,296.5 Q211.12,294.73 212.9,294.73 L222.7,294.73 Q224.47,294.73 224.47,296.5 L224.47,430.17 Z" fill="none" stroke="#ff9800" stroke-width="0.45"/>
<path d="M229.69,430.4 L229.69,312 Q229.69,310 231.69,310 L241.49,310 Q243.49,310 243.49,312 L243.49,430.4 Z" fill="#ff9800" fill-opacity="0.5"/>
<path d="M229.91,430.17 L229.91,312 Q229.91,310.23 231.69,310.23 L241.49,310.23 Q243.27,310.23 243.27,312 L243.27,430.17 Z" fill="none" stroke="#ff9800" stroke-width="0.45"/>
<path d="M248.48,430.4 L248.48,313 Q248.48,311 250.48,311 L260.28,311 Q262.28,311 262.28,313 L262.28,430.4 Z" fill="#ff9800" fill-opacity="0.5"/>
<path d="M248.7,430.17 L248.7,313 Q248.7,311.23 250.48,311.23 L260.28,311.23 Q262.05,311.23 262.05,313 L262.05,430.17 Z" fill="none" stroke="#ff9800" stroke-width="0.45"/>
<path d="M267.27,430.4 L267.27,320.4 Q267.27,318.4 269.27,318.4 L279.07,318.4 Q281.07,318.4 281.07,320.4 L281.07,430.4 Z" fill="#ff9800" fill-opacity="0.5"/>
<path d="M267.5,430.17 L267.5,320.4 Q267.5,318.62 269.27,318.62 L279.07,318.62 Q280.84,318.62 280.84,320.4 L280.84,430.17 Z" fill="none" stroke="#ff9800" stroke-width="0.45"/>
<path d="M286.06,430.4 L286.06,302.6 Q286.06,300.6 288.06,300.6 L297.86,300.6 Q299.86,300.6 299.86,302.6 L299.86,430.4 Z" fill="#ff9800" fill-opacity="0.5"/>
<path d="M286.29,430.17 L286.29,302.6 Q286.29,300.83 288.06,300.83 L297.86,300.83 Q299.63,300.83 299.63,302.6 L299.63,430.17 Z" fill="none" stroke="#ff9800" stroke-width="0.45"/>
<path d="M304.85,430.4 L304.85,401.2 Q304.85,399.2 306.85,399.2 L316.65,399.2 Q318.65,399.2 318.65,401.2 L318.65,430.4 Z" fill="#ff9800" fill-opacity="0.5"/>
<path d="M305.07,430.17 L305.07,401.2 Q305.07,399.43 306.85,399.43 L316.65,399.43 Q318.42,399.43 318.42,401.2 L318.42,430.17 Z" fill="none" stroke="#ff9800" stroke-width="0.45"/>
<path d="M323.64,430.4 L323.64,317.2 Q323.64,315.2 325.64,315.2 L335.44,315.2 Q337.44,315.2 337.44,317.2 L337.44,430.4 Z" fill="#ff9800" fill-opacity="0.5"/>
<path d="M323.87,430.17 L323.87,317.2 Q323.87,315.43 325.64,315.43 L335.44,315.43 Q337.21,315.43 337.21,317.2 L337.21,430.17 Z" fill="none" stroke="#ff9800" stroke-width="0.45"/>
<path d="M342.43,430.4 L342.43,314.8 Q342.43,312.8 344.43,312.8 L354.23,312.8 Q356.23,312.8 356.23,314.8 L356.23,430.4 Z" fill="#ff9800" fill-opacity="0.5"/>
<path d="M342.66,430.17 L342.66,314.8 Q342.66,313.03 344.43,313.03 L354.23,313.03 Q356,313.03 356,314.8 L356,430.17 Z" fill="none" stroke="#ff9800" stroke-width="0.45"/>
<path d="M361.22,430.4 L361.22,305.1 Q361.22,303.1 363.22,303.1 L373.02,303.1 Q375.02,303.1 375.02,305.1 L375.02,430.4 Z" fill="#ff9800" fill-opacity="0.5"/>
<path d="M361.44,430.17 L361.44,305.1 Q361.44,303.33 363.22,303.33 L373.02,303.33 Q374.79,303.33 374.79,305.1 L374.79,430.17 Z" fill="none" stroke="#ff9800" stroke-width="0.45"/>
<path d="M380.01,430.4 L380.01,326.1 Q380.01,324.1 382.01,324.1 L391.81,324.1 Q393.81,324.1 393.81,326.1 L393.81,430.4 Z" fill="#ff9800" fill-opacity="0.5"/>
<path d="M380.24,430.17 L380.24,326.1 Q380.24,324.33 382.01,324.33 L391.81,324.33 Q393.58,324.33 393.58,326.1 L393.58,430.17 Z" fill="none" stroke="#ff9800" stroke-width="0.45"/>
<path d="M29.9,326.7 C30.46,327.46 48.24,352.32 48.69,352.1 C49.37,351.77 66.79,308.77 67.48,308.4 C67.92,308.17 85.76,332.2 86.27,332.1 C86.88,331.98 104.32,301.95 105.06,301.3 C105.45,300.96 123.32,299.19 123.85,299.3 C124.45,299.43 142.36,308.87 142.64,309.4 C143.48,310.99 160.92,370.2 161.43,370 C162.05,369.76 179.32,296.78 180.22,294.9 C180.44,294.44 198.45,291.8 199.01,291.7 C199.58,291.6 217.3,287.85 217.8,288 C218.43,288.19 236,302.5 236.59,302.9 C237.12,303.26 254.79,313.33 255.38,313.6 C255.92,313.85 273.73,320.31 274.17,320.1 C274.86,319.77 292.69,294.88 292.96,295.4 C293.82,297.09 311.1,393.26 311.75,393.75 C312.22,394.11 329.72,325.71 330.54,323.75 C330.85,323.02 348.7,304.69 349.33,304.2 C349.82,303.81 367.71,294.15 368.12,294.4 C368.84,294.84 386.32,326.84 386.91,326.9 C387.45,326.96 405.25,298.07 405.7,298.3 C406.38,298.65 423.68,345.29 424.49,346.5 C424.81,346.98 443.02,355.1 443.28,354.7 C444.15,353.33 461.28,288.34 462.07,287.4 C462.4,287 480.18,309.67 480.86,310 C481.31,310.22 499.15,305.46 499.65,305.6 C500.27,305.77 517.88,319.76 518.44,320.2" fill="none" stroke="#e1e1e1" stroke-width="0.95" stroke-dasharray="3.1 2.1"/>
</g>
<g id="dist">
<path d="M687.6,87.85 V104 C687.6,114.5 685.6,122.1 677.5,122.1 H664.5" fill="none" stroke="#a280db" stroke-width="0.55"/>
<path d="M691.6,87.85 V104 C691.6,114.5 693.6,122.1 701.7,122.1 H715" fill="none" stroke="#ff9800" stroke-width="0.55"/>
<path d="M664.5,126.2 H715" fill="none" stroke="#488fc2" stroke-width="0.55"/>
<path d="M735.4,87.85 V104.1" fill="none" stroke="#8e021b" stroke-width="0.55"/>
<circle cx="672.15" cy="122.1" r="2" fill="#a280db"/>
<circle cx="700.3" cy="122.1" r="2" fill="#ff9800"/>
<circle cx="695.6" cy="126.2" r="2" fill="#488fc2"/>
<circle cx="735.4" cy="95.1" r="2" fill="#8e021b"/>
<circle cx="689.7" cy="67.45" r="20.4" fill="#1c1c1c" stroke="#ff9800" stroke-width="1.05"/>
<circle cx="735.4" cy="67.45" r="20.4" fill="#1c1c1c" stroke="#8e021b" stroke-width="1.05"/>
<circle cx="644.1" cy="124.7" r="20.4" fill="#1c1c1c" stroke="#488fc2" stroke-width="1.05"/>
<circle cx="735.35" cy="124.5" r="19.75" fill="#1c1c1c"/>
<path d="M715.6,124.5 A19.75,19.75 0 0 1 755.1,124.5" fill="none" stroke="#ff9800" stroke-width="2.3"/>
<path d="M715.6,124.5 A19.75,19.75 0 0 0 755.1,124.5" fill="none" stroke="#488fc2" stroke-width="2.3"/>
<path d="M1.5,1.5H15.6V3.6L11.2,4.6L9.6,8.2L12.4,12.4L9.8,12.8L7.4,10.4L4.2,10.8V14.6H1.5Z" fill="#cfcfcf" transform="translate(683.2,58) scale(0.53)"/>
<path d="M18.4,6.8L14.2,15.2H17.4L16.2,21.6L22.8,12.4H19.4L21,6.8Z" fill="#e1e1e1" transform="translate(683.2,58) scale(0.53)"/>
<path d="M17.66 11.2C17.43 10.9 17.15 10.64 16.89 10.38C16.22 9.78 15.46 9.35 14.82 8.72C13.33 7.26 13 4.85 13.95 3C13 3.23 12.17 3.75 11.46 4.32C8.87 6.4 7.85 10.07 9.07 13.22C9.11 13.32 9.15 13.42 9.15 13.55C9.15 13.77 9 13.97 8.8 14.05C8.57 14.15 8.33 14.09 8.14 13.93C8.08 13.88 8.04 13.83 8 13.76C6.87 12.33 6.69 10.28 7.45 8.64C5.78 10 4.87 12.3 5 14.47C5.06 14.97 5.12 15.47 5.29 15.97C5.43 16.57 5.7 17.17 6 17.7C7.08 19.43 8.95 20.67 10.96 20.92C13.1 21.19 15.39 20.8 17.03 19.32C18.86 17.66 19.5 15 18.56 12.72L18.43 12.46C18.22 12 17.66 11.2 17.66 11.2M14.5 17.5C14.22 17.74 13.76 18 13.4 18.1C12.28 18.5 11.16 17.94 10.5 17.28C11.69 17 12.4 16.12 12.61 15.23C12.78 14.43 12.46 13.77 12.33 13C12.21 12.26 12.23 11.63 12.5 10.94C12.69 11.32 12.89 11.7 13.13 12C13.9 13 15.11 13.44 15.37 14.8C15.41 14.94 15.43 15.08 15.43 15.23C15.46 16.05 15.1 16.95 14.5 17.5H14.5Z" fill="#e1e1e1" transform="translate(728.9,57.55) scale(0.53)"/>
<path d="M8.28,5.45L6.5,4.55L7.76,2H16.23L17.5,4.55L15.72,5.44L15,4H9L8.28,5.45M18.62,8H14.09L13.3,5H10.7L9.91,8H5.38L4.1,10.55L5.89,11.44L6.62,10H17.38L18.1,11.45L19.89,10.56L18.62,8M17.77,22H15.7L15.46,21.1L12,15.9L8.53,21.1L8.3,22H6.21L9.12,11H11.19L10.83,12.35L12,14.1L13.16,12.35L12.81,11H14.88L17.77,22M11.4,15L10.5,13.65L9.32,18.13L11.4,15M14.68,18.12L13.5,13.64L12.6,15L14.68,18.12Z" fill="#e1e1e1" transform="translate(638,110.7) scale(0.52)"/>
<path d="M10,20V14H14V20H19V12H22L12,3L2,12H5V20H10Z" fill="#e1e1e1" transform="translate(729.1,114.95) scale(0.52)"/>
<text transform="translate(689.7,43) scale(0.88,1)" font-size="7.0" text-anchor="middle" fill="#9b9b9b" font-weight="normal" >Zonne-energie</text>
<text transform="translate(735.4,43) scale(0.88,1)" font-size="7.0" text-anchor="middle" fill="#9b9b9b" font-weight="normal" >Gas</text>
<text transform="translate(644,152.3) scale(0.88,1)" font-size="7.0" text-anchor="middle" fill="#9b9b9b" font-weight="normal" >Net</text>
<text transform="translate(735.4,152.3) scale(0.88,1)" font-size="7.0" text-anchor="middle" fill="#9b9b9b" font-weight="normal" >Thuis</text>
<text transform="translate(689.7,76.8) scale(0.88,1)" font-size="7.0" text-anchor="middle" fill="#e1e1e1" font-weight="normal" >927 kWh</text>
<text transform="translate(735.4,76.8) scale(0.88,1)" font-size="7.0" text-anchor="middle" fill="#e1e1e1" font-weight="normal" >445 kWh</text>
<text transform="translate(735.4,133.7) scale(0.88,1)" font-size="7.0" text-anchor="middle" fill="#e1e1e1" font-weight="normal" >938 kWh</text>
<path d="M20,11V13H8L13.5,18.5L12.08,19.92L4.16,12L12.08,4.08L13.5,5.5L8,11H20Z" fill="#a280db" transform="translate(628.75,124.35) scale(0.25)"/>
<text transform="translate(634.8,129.8) scale(0.88,1)" font-size="7.0" text-anchor="start" fill="#a280db" font-weight="normal" >455 kWh</text>
<path d="M4,11V13H16L10.5,18.5L11.92,19.92L19.84,12L11.92,4.08L10.5,5.5L16,11H4Z" fill="#488fc2" transform="translate(628.75,130.95) scale(0.25)"/>
<text transform="translate(634.8,136.2) scale(0.88,1)" font-size="7.0" text-anchor="start" fill="#488fc2" font-weight="normal" >466 kWh</text>
</g>
<g id="gauges">
<path d="M637.5,242.5 A52,52 0 0 1 689.5,190.5" fill="none" stroke="#488fc2" stroke-width="19.5"/>
<path d="M689.5,190.5 A52,52 0 0 1 741.5,242.5" fill="none" stroke="#a280db" stroke-width="19.5"/>
<path d="M-32.5,-3.25 L-61.75,0 L-32.5,3.25 Z" fill="#e8e8e8" transform="translate(689.5,242.5) rotate(88.4)"/>
<text transform="translate(689.5,242.4) scale(0.955,1)" font-size="14.0" text-anchor="middle" fill="#e1e1e1" font-weight="normal" >10,64 kWh</text>
<text transform="translate(689.5,253.2) scale(0.89,1)" font-size="8.0" text-anchor="middle" fill="#e1e1e1" font-weight="normal" >Verbruikte energie van het net</text>
<path d="M13,9H11V7H13M13,17H11V11H13M12,2A10,10 0 0,0 2,12A10,10 0 0,0 12,22A10,10 0 0,0 22,12A10,10 0 0,0 12,2Z" fill="#a2a2a2" transform="translate(749.7,171.6) scale(0.52)"/>
<path d="M637.5,342 A52,52 0 0 1 741.5,342" fill="none" stroke="#111111" stroke-width="19.5"/>
<path d="M637.5,342 A52,52 0 0 1 691.13,290.03" fill="none" stroke="#0396e3" stroke-width="19.5"/>
<text transform="translate(689.5,340.2) scale(0.965,1)" font-size="19.8" text-anchor="middle" fill="#e1e1e1" font-weight="normal" >51%</text>
<text transform="translate(689.5,352.7) scale(0.89,1)" font-size="8.0" text-anchor="middle" fill="#e1e1e1" font-weight="normal" >Zelf verbruikte zonne-energie</text>
<path d="M13,9H11V7H13M13,17H11V11H13M12,2A10,10 0 0,0 2,12A10,10 0 0,0 12,22A10,10 0 0,0 22,12A10,10 0 0,0 12,2Z" fill="#a2a2a2" transform="translate(749.7,271.6) scale(0.52)"/>
<path d="M637.5,441.9 A52,52 0 0 1 741.5,441.9" fill="none" stroke="#111111" stroke-width="19.5"/>
<path d="M637.5,441.9 A52,52 0 0 1 689.5,389.9" fill="none" stroke="#0396e3" stroke-width="19.5"/>
<text transform="translate(689.5,440.1) scale(0.965,1)" font-size="19.8" text-anchor="middle" fill="#e1e1e1" font-weight="normal" >50%</text>
<text transform="translate(689.5,452.6) scale(0.89,1)" font-size="8.0" text-anchor="middle" fill="#e1e1e1" font-weight="normal" >Zelfvoorziening</text>
<path d="M13,9H11V7H13M13,17H11V11H13M12,2A10,10 0 0,0 2,12A10,10 0 0,0 12,22A10,10 0 0,0 22,12A10,10 0 0,0 12,2Z" fill="#a2a2a2" transform="translate(749.7,371.4) scale(0.52)"/>
</g>
</svg>
</body>
</html>
